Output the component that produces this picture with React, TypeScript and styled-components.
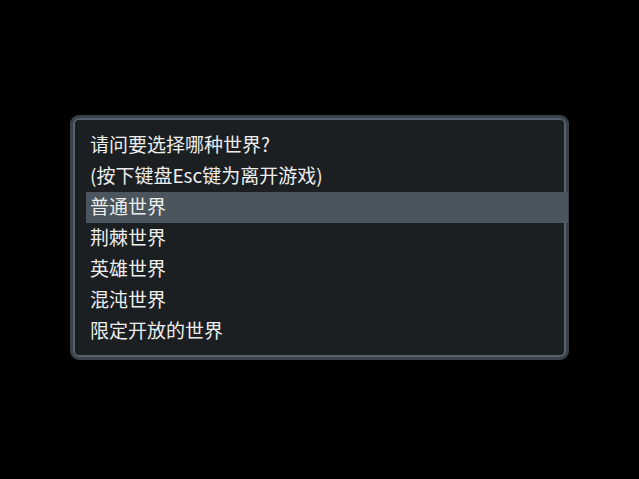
import React from 'react'
import styled, { createGlobalStyle } from 'styled-components'

const GlobalStyle = createGlobalStyle`
  html, body {
    margin: 0;
    padding: 0;
    background: #000000;
  }
  body {
    width: 639px;
    height: 479px;
    overflow: hidden;
    font-family: "Noto Sans CJK SC", "Noto Sans", sans-serif;
  }
`

const Screen = styled.div`
  width: 639px;
  height: 479px;
  padding-top: 115px;
  box-sizing: border-box;
  background: #000000;
`

const Frame = styled.div`
  width: 499px;
  height: 245px;
  margin: 0 0 0 70px;
  box-sizing: border-box;
  border: 3px solid #39424a;
  border-radius: 9px;
  background: #1b1f22;
  display: flex;
`

const Inner = styled.div`
  flex: 1;
  box-sizing: border-box;
  border: 2px solid #56636e;
  border-radius: 6px;
  padding: 10px 0 6px 11px;
`

const List = styled.ul`
  list-style: none;
  margin: 0 -4px 0 0;
  padding: 0;
`

const Row = styled.li<{ $selected?: boolean }>`
  height: 31px;
  box-sizing: border-box;
  line-height: 28px;
  padding: 0 0 3px 4px;
  font-size: 19px;
  color: #eeeeee;
  white-space: nowrap;
  background: ${p => (p.$selected ? '#4a555d' : 'transparent')};
`

const lines = [
  '请问要选择哪种世界?',
  '(按下键盘Esc键为离开游戏)',
  '普通世界',
  '荆棘世界',
  '英雄世界',
  '混沌世界',
  '限定开放的世界',
]

const App = () => {
  const selected = 2
  return (
    <>
      <GlobalStyle />
      <Screen>
        <Frame>
          <Inner>
            <List>
              {lines.map((text, i) => (
                <Row key={text} $selected={i === selected}>
                  {text}
                </Row>
              ))}
            </List>
          </Inner>
        </Frame>
      </Screen>
    </>
  )
}

export default App
